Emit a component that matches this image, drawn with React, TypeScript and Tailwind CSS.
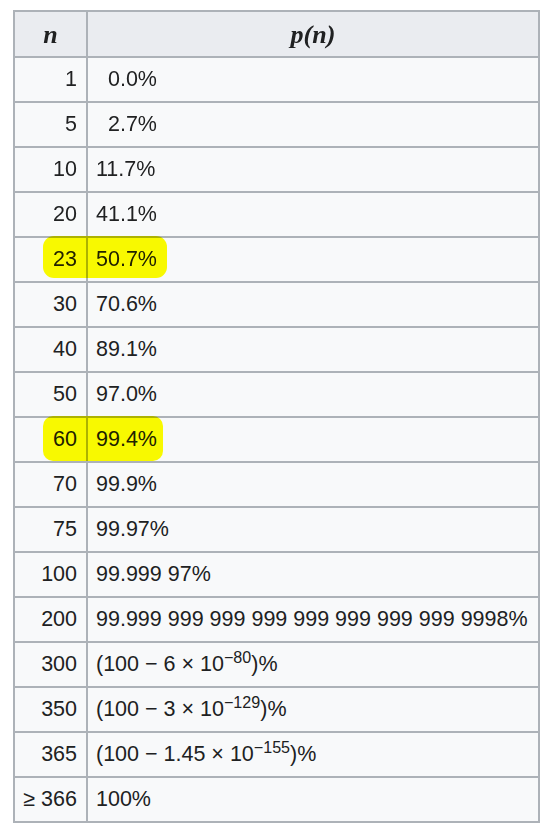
const rows: { n: string; p: React.ReactNode; mark?: string }[] = [
  { n: "1", p: "\u20070.0%" },
  { n: "5", p: "\u20072.7%" },
  { n: "10", p: "11.7%" },
  { n: "20", p: "41.1%" },
  { n: "23", p: "50.7%", mark: "top-[-2px] h-[42px] w-[124px] rounded-[11px]" },
  { n: "30", p: "70.6%" },
  { n: "40", p: "89.1%" },
  { n: "50", p: "97.0%" },
  { n: "60", p: "99.4%", mark: "top-[-2px] h-[45px] w-[120px] rounded-[10px]" },
  { n: "70", p: "99.9%" },
  { n: "75", p: "99.97%" },
  { n: "100", p: "99.999 97%" },
  { n: "200", p: "99.999 999 999 999 999 999 999 999 9998%" },
  {
    n: "300",
    p: (
      <>
        (100 − 6 × 10<sup>−80</sup>)%
      </>
    ),
  },
  {
    n: "350",
    p: (
      <>
        (100 − 3 × 10<sup>−129</sup>)%
      </>
    ),
  },
  {
    n: "365",
    p: (
      <>
        (100 − 1.45 × 10<sup>−155</sup>)%
      </>
    ),
  },
  { n: "≥ 366", p: "100%" },
];

export default function App() {
  return (
    <div className="min-h-[830px] bg-white pt-[10px] pl-[13px] font-['Liberation_Sans',Arial,sans-serif] text-[21.5px] text-[#202122]">
      <div className="w-[527px] border-2 border-[#adb2b8]">
        {/* header */}
        <div className="flex h-[44px] bg-[#eaecf0] font-['Liberation_Serif',serif] text-[26px] font-bold italic">
          <div className="flex w-[71px] items-center justify-center">n</div>
          <div className="flex flex-1 items-center justify-center border-l-2 border-[#adb2b8]">
            p(n)
          </div>
        </div>

        {rows.map((r) => (
          <div
            key={r.n}
            className="relative flex h-[45px] border-t-2 border-[#adb2b8] bg-[#f8f9fa]"
          >
            <div className="flex w-[71px] items-center justify-end pr-[9px]">{r.n}</div>
            <div className="flex flex-1 items-center border-l-2 border-[#adb2b8] pl-[8px]">
              <span className="[&_sup]:text-[0.75em]">{r.p}</span>
            </div>
            {r.mark && (
              <div
                className={`pointer-events-none absolute left-[28px] bg-[#ffff00] mix-blend-multiply blur-[0.6px] ${r.mark}`}
              />
            )}
          </div>
        ))}
      </div>
    </div>
  );
}
